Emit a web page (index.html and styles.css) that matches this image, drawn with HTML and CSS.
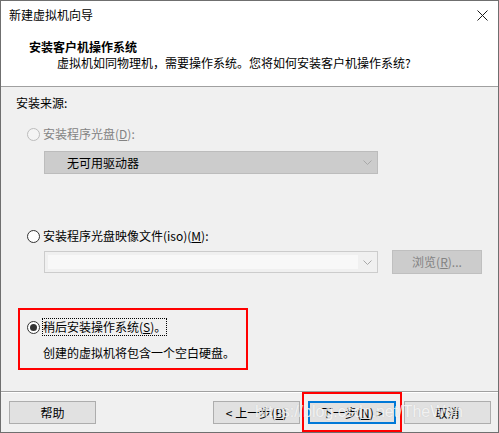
FILE: index.html
```html
<!DOCTYPE html>
<html lang="zh-CN">
<head>
  <meta charset="UTF-8">
  <title>新建虚拟机向导</title>
  <link rel="stylesheet" href="styles.css">
</head>
<body>

  <div class="window">
    <div class="titlebar">
      <span class="title">新建虚拟机向导</span>
      <svg class="close" width="11" height="11" viewBox="0 0 11 11">
        <path d="M0.5 0.5 L10.5 10.5 M10.5 0.5 L0.5 10.5" stroke="#1a1a1a" stroke-width="1"/>
      </svg>
    </div>

    <div class="header">
      <div class="header-title">安装客户机操作系统</div>
      <div class="header-sub">虚拟机如同物理机，需要操作系统。您将如何安装客户机操作系统?</div>
    </div>

    <div class="content">
      <div class="section-label">安装来源:</div>

      <div class="option disabled">
        <span class="radio"></span>
        <span>安装程序光盘(<u>D</u>):</span>
      </div>
      <div class="select select-disabled">
        <span class="select-text">无可用驱动器</span>
        <svg class="chevron" width="9" height="5" viewBox="0 0 9 5">
          <path d="M0.5 0.5 L4.5 4.5 L8.5 0.5" stroke="#a8a8a8" fill="none"/>
        </svg>
      </div>

      <div class="option option-iso">
        <span class="radio"></span>
        <span>安装程序光盘映像文件(iso)(<u>M</u>):</span>
      </div>
      <div class="iso-row">
        <div class="select select-iso">
          <span class="iso-field"></span>
          <svg class="chevron" width="9" height="5" viewBox="0 0 9 5">
            <path d="M0.5 0.5 L4.5 4.5 L8.5 0.5" stroke="#a8a8a8" fill="none"/>
          </svg>
        </div>
        <div class="btn btn-disabled">浏览(<u>R</u>)...</div>
      </div>

      <div class="highlight">
        <div class="option">
          <span class="radio checked"></span>
          <span class="focus">稍后安装操作系统(<u>S</u>)。</span>
        </div>
        <div class="note">创建的虚拟机将包含一个空白硬盘。</div>
      </div>
    </div>

    <div class="footer">
      <div class="btn">帮助</div>
      <div class="footer-right">
        <div class="btn">&lt; 上一步(<u>B</u>)</div>
        <div class="btn btn-default">下一步(<u>N</u>) &gt;</div>
        <div class="btn">取消</div>
      </div>
      <div class="mark-box"></div>
      <div class="watermark">https://blog.csdn.net/TheWon</div>
    </div>
  </div>

</body>
</html>
```

FILE: styles.css
```css
body {
  margin: 0;
  font-family: "Noto Sans CJK SC", "Liberation Sans", sans-serif;
  font-size: 12px;
  color: #000;
  background: #fff;
}

.window {
  width: 499px;
  height: 433px;
  box-sizing: border-box;
  border: 1px solid #6f6f6f;
  background: #f0f0f0;
  display: flex;
  flex-direction: column;
  overflow: hidden;
}

.titlebar {
  height: 28px;
  background: #fff;
  display: flex;
  align-items: center;
  justify-content: space-between;
  padding: 0 10px 0 8px;
}

.title {
  line-height: 16px;
}

.close {
  display: block;
}

.header {
  height: 58px;
  box-sizing: border-box;
  background: #fff;
  border-bottom: 1px solid #a0a0a0;
  padding: 9px 0 0 28px;
}

.header-title {
  font-weight: bold;
  line-height: 17px;
}

.header-sub {
  line-height: 16px;
  padding-left: 28px;
}

.content {
  height: 304px;
  box-sizing: border-box;
  padding: 8px 0 0 15px;
}

.section-label {
  line-height: 16px;
}

.option {
  display: flex;
  align-items: center;
  gap: 3px;
  line-height: 16px;
  margin-top: 15px;
  padding-left: 11px;
}

.option.disabled {
  color: #838383;
}

.option-iso {
  margin-top: 54px;
}

.radio {
  width: 13px;
  height: 13px;
  box-sizing: border-box;
  border: 1px solid #333;
  border-radius: 50%;
  background: #fff;
  display: flex;
  align-items: center;
  justify-content: center;
}

.disabled .radio {
  border-color: #bcbcbc;
  background: #f4f4f4;
}

.radio.checked::after {
  content: "";
  width: 7px;
  height: 7px;
  border-radius: 50%;
  background: #333;
}

.select {
  width: 334px;
  height: 23px;
  box-sizing: border-box;
  border: 1px solid #bcbcbc;
  display: flex;
  align-items: center;
  justify-content: space-between;
  padding: 0 5px 0 22px;
}

.select-disabled {
  background: #cccccc;
  margin: 9px 0 0 28px;
}

.select-text {
  line-height: 16px;
}

.iso-row {
  display: flex;
  align-items: center;
  gap: 14px;
  margin: 6px 0 0 28px;
}

.select-iso {
  height: 22px;
  border-color: #cccccc;
  background: #f0f0f0;
  padding: 0 5px 0 3px;
}

.iso-field {
  width: 310px;
  height: 14px;
  background: #f8f8f8;
}

.btn {
  width: 87px;
  height: 23px;
  box-sizing: border-box;
  border: 1px solid #adadad;
  background: #e1e1e1;
  display: flex;
  align-items: center;
  justify-content: center;
  line-height: 16px;
}

.btn-disabled {
  width: 90px;
  height: 24px;
  background: #cccccc;
  border-color: #bfbfbf;
  color: #838383;
}

.btn-default {
  border: 2px solid #0078d7;
  width: 88px;
}

.highlight {
  width: 230px;
  box-sizing: border-box;
  border: 2px solid #ff0000;
  margin: 34px 0 0 2px;
  padding: 9px 0 7px 7px;
}

.highlight .option {
  margin-top: 0;
  padding-left: 0;
}

.focus {
  outline: 1px dotted #000;
  outline-offset: 0;
}

.note {
  line-height: 16px;
  margin: 10px 0 0 16px;
}

.footer {
  position: relative;
  flex: 1;
  border-top: 1px solid #a0a0a0;
  box-shadow: inset 0 1px 0 #fff;
  display: flex;
  justify-content: space-between;
  padding: 9px 7px 0 8px;
}

.footer-right {
  display: flex;
  gap: 8px;
  height: 23px;
}

.mark-box {
  position: absolute;
  left: 301px;
  top: 0;
  width: 100px;
  height: 40px;
  box-sizing: border-box;
  border: 2px solid #ff0000;
}

.watermark {
  position: absolute;
  left: 254px;
  top: 10px;
  font-family: "Liberation Sans", sans-serif;
  font-size: 16px;
  line-height: 20px;
  color: rgba(255, 255, 255, 0.75);
  text-shadow: 0 0 1px rgba(120, 120, 120, 0.25);
  white-space: nowrap;
  pointer-events: none;
}
```
